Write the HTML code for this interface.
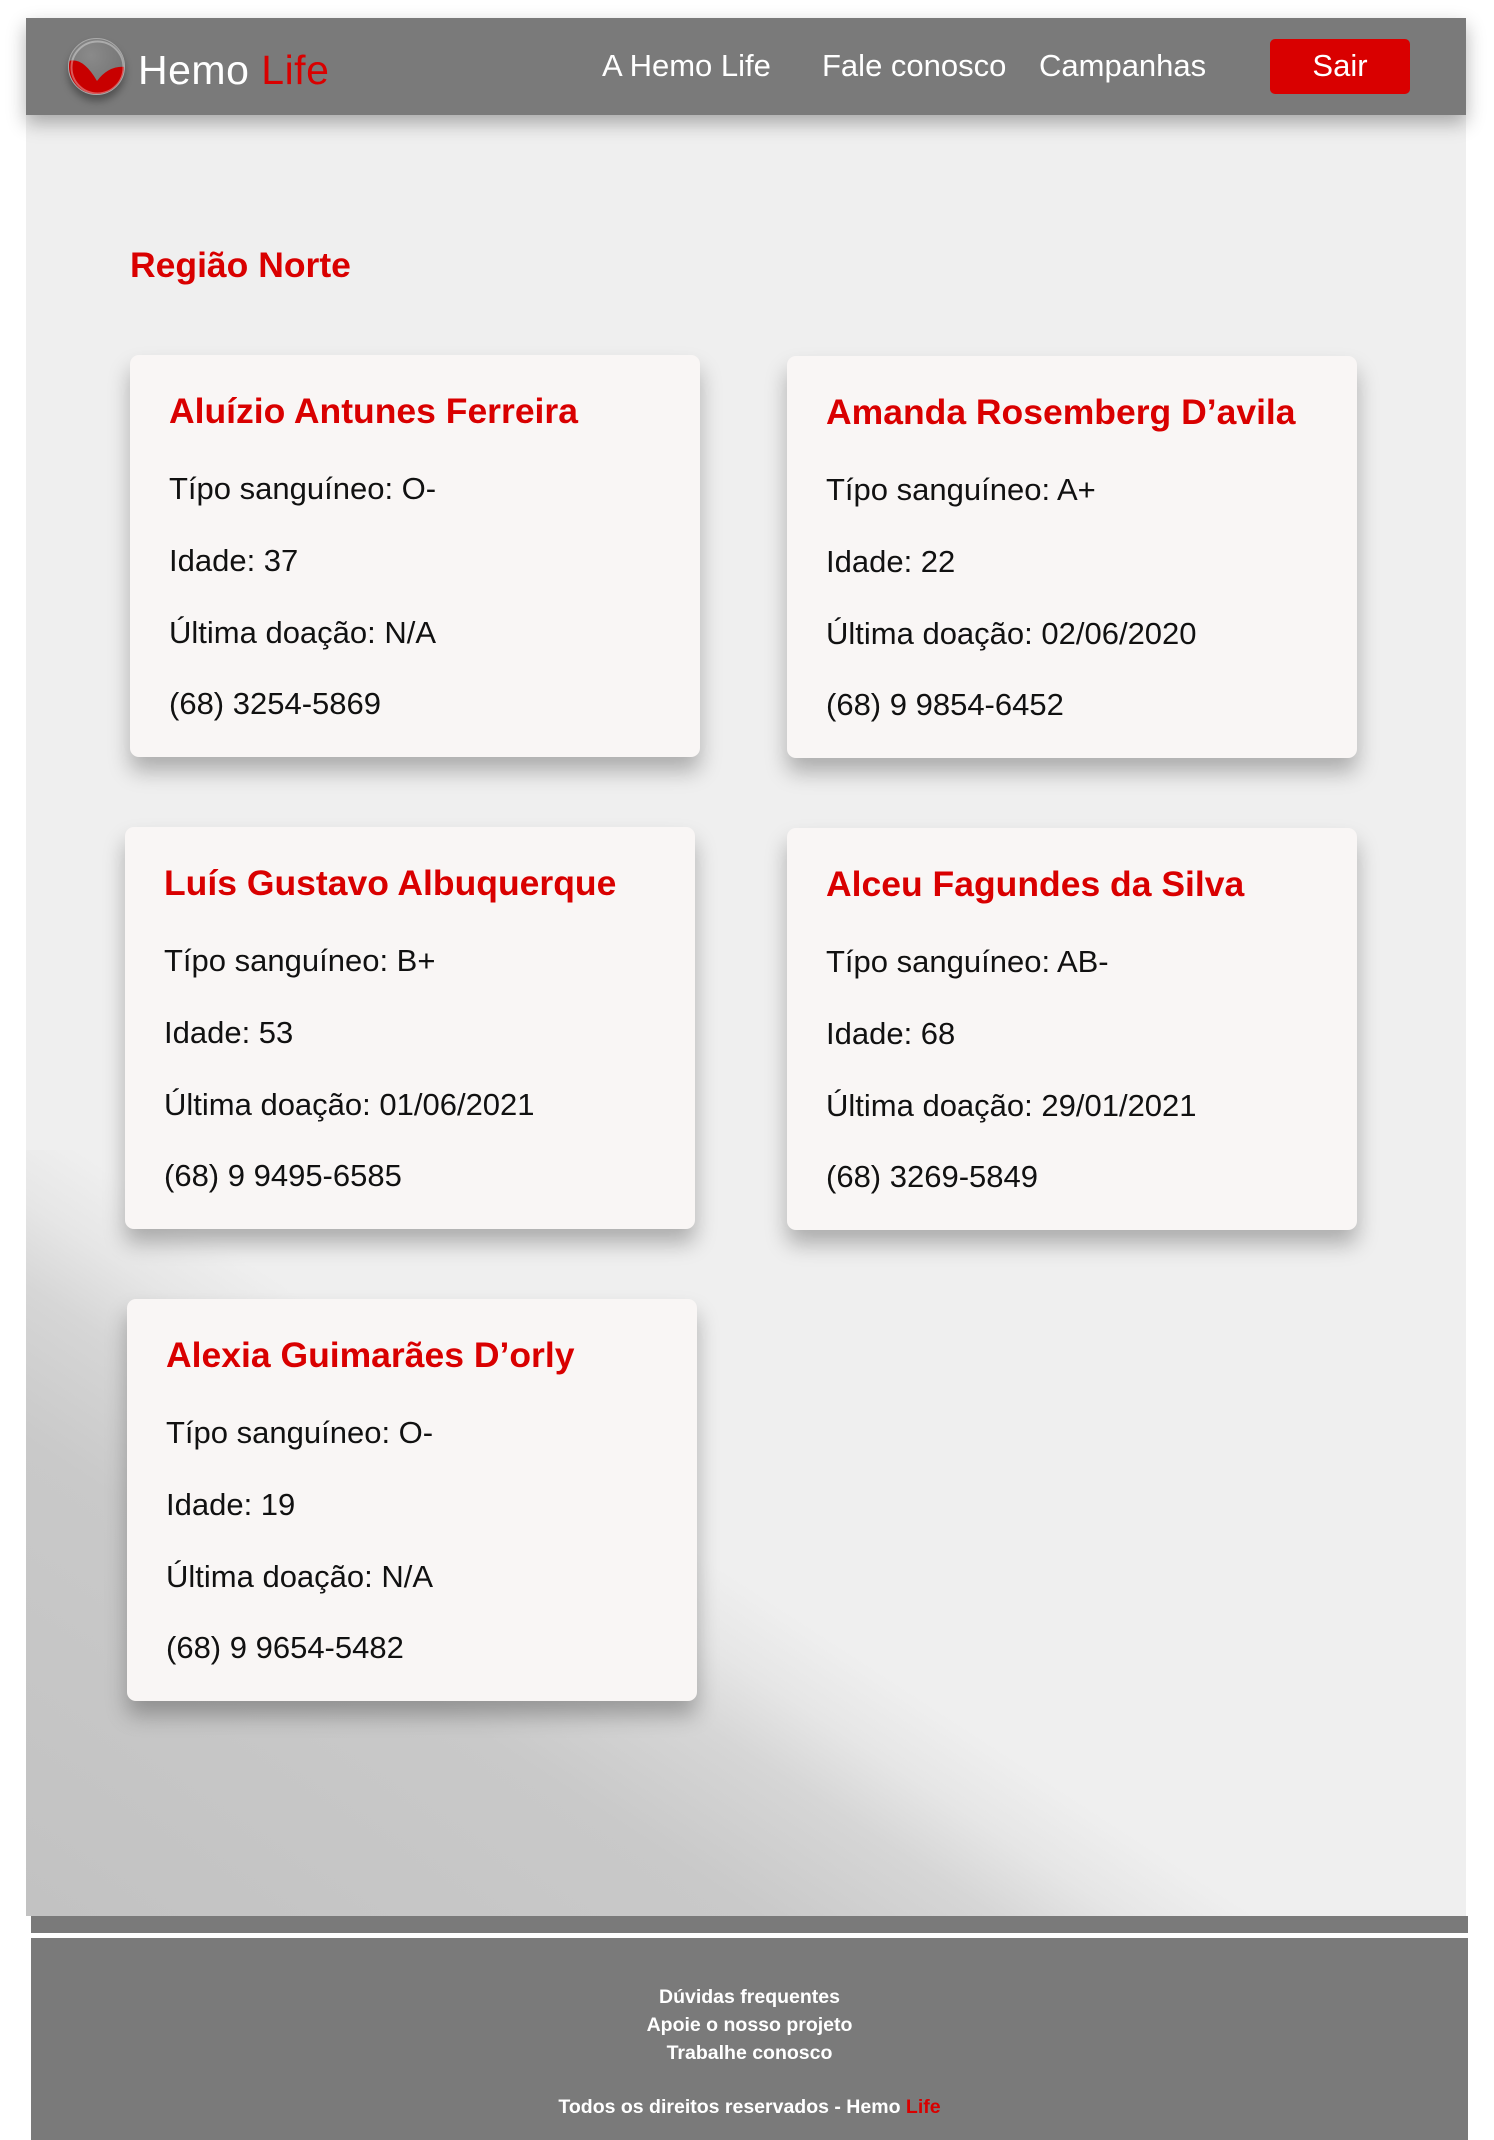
<!DOCTYPE html>
<html><head><meta charset="utf-8"><style>
*{margin:0;padding:0;box-sizing:border-box}
body{width:1494px;height:2140px;background:#fff;position:relative;overflow:hidden;font-family:"Liberation Sans",sans-serif}
.content{position:absolute;left:26px;top:18px;width:1440px;height:1898px;background:#efefef}
.grad{position:absolute;left:26px;top:1150px;width:1440px;height:766px;background:linear-gradient(33deg,#c2c2c2 0%,#c9c9c9 28%,#d6d6d6 37%,#e6e6e6 42%,#efefef 47%)}
header{position:absolute;left:26px;top:18px;width:1440px;height:97px;background:#7a7a7a;box-shadow:0 8px 18px rgba(0,0,0,.3)}
.logo{position:absolute;left:42px;top:20px;width:57px;height:57px;border-radius:50%;background:radial-gradient(circle at 40% 30%,#8a8a8a,#6c6c6c);box-shadow:0 6px 8px rgba(0,0,0,.35);overflow:hidden;border:1px solid #aaa}
.brand{position:absolute;left:112px;top:29px;font-size:41px;color:#fff;letter-spacing:.5px}
.red{color:#d90000}
.nav{position:absolute;top:30px;font-size:31px;color:#fff}
.sair{position:absolute;left:1244px;top:21px;width:140px;height:55px;background:#d90000;border-radius:5px;color:#fff;font-size:31px;text-align:center;line-height:53px}
h2{position:absolute;left:130px;top:245px;font-size:35.5px;color:#d90000;font-weight:bold}
.card{position:absolute;width:570px;height:402px;background:#f9f6f5;border-radius:9px;box-shadow:0 14px 22px rgba(0,0,0,.28)}
.card h3{position:absolute;left:39px;top:36px;font-size:35.5px;color:#d90000;font-weight:bold;white-space:nowrap}
.card p{position:absolute;left:39px;font-size:31px;color:#111;white-space:nowrap}
footer{position:absolute;left:31px;top:1916px;width:1437px;height:224px;background:#7a7a7a;color:#fff;font-weight:bold;font-size:19.5px;text-align:center}
.wl{position:absolute;left:0;top:17px;width:100%;height:5px;background:#fff}
</style></head><body>
<div class="content"></div>
<div class="grad"></div>
<header>
<div class="logo"><svg width="57" height="57" viewBox="0 0 57 57"><path d="M0 22 Q14 18 28 42 Q40 26 57 28 L57 57 L0 57Z" fill="#c80000"/><circle cx="28.5" cy="28.5" r="26" fill="none" stroke="rgba(255,255,255,.35)" stroke-width="2"/></svg></div>
<div class="brand">Hemo <span class="red">Life</span></div>
<div class="nav" style="left:576px">A Hemo Life</div>
<div class="nav" style="left:796px">Fale conosco</div>
<div class="nav" style="left:1013px">Campanhas</div>
<div class="sair">Sair</div>
</header>
<h2>Região Norte</h2>

<div class="card" style="left:130px;top:355px"><h3>Aluízio Antunes Ferreira</h3><p style="top:116px">Típo sanguíneo: O-</p><p style="top:188px">Idade: 37</p><p style="top:260px">Última doação: N/A</p><p style="top:331px">(68) 3254-5869</p></div>
<div class="card" style="left:787px;top:356px"><h3>Amanda Rosemberg D’avila</h3><p style="top:116px">Típo sanguíneo: A+</p><p style="top:188px">Idade: 22</p><p style="top:260px">Última doação: 02/06/2020</p><p style="top:331px">(68) 9 9854-6452</p></div>
<div class="card" style="left:125px;top:827px"><h3>Luís Gustavo Albuquerque</h3><p style="top:116px">Típo sanguíneo: B+</p><p style="top:188px">Idade: 53</p><p style="top:260px">Última doação: 01/06/2021</p><p style="top:331px">(68) 9 9495-6585</p></div>
<div class="card" style="left:787px;top:828px"><h3>Alceu Fagundes da Silva</h3><p style="top:116px">Típo sanguíneo: AB-</p><p style="top:188px">Idade: 68</p><p style="top:260px">Última doação: 29/01/2021</p><p style="top:331px">(68) 3269-5849</p></div>
<div class="card" style="left:127px;top:1299px"><h3>Alexia Guimarães D’orly</h3><p style="top:116px">Típo sanguíneo: O-</p><p style="top:188px">Idade: 19</p><p style="top:260px">Última doação: N/A</p><p style="top:331px">(68) 9 9654-5482</p></div>

<footer>
<div class="wl"></div>
<div style="position:absolute;left:0;width:100%;top:67px;line-height:28px">Dúvidas frequentes<br>Apoie o nosso projeto<br>Trabalhe conosco</div>
<div style="position:absolute;left:0;width:100%;top:180px">Todos os direitos reservados - Hemo <span class="red">Life</span></div>
</footer>
</body></html>
